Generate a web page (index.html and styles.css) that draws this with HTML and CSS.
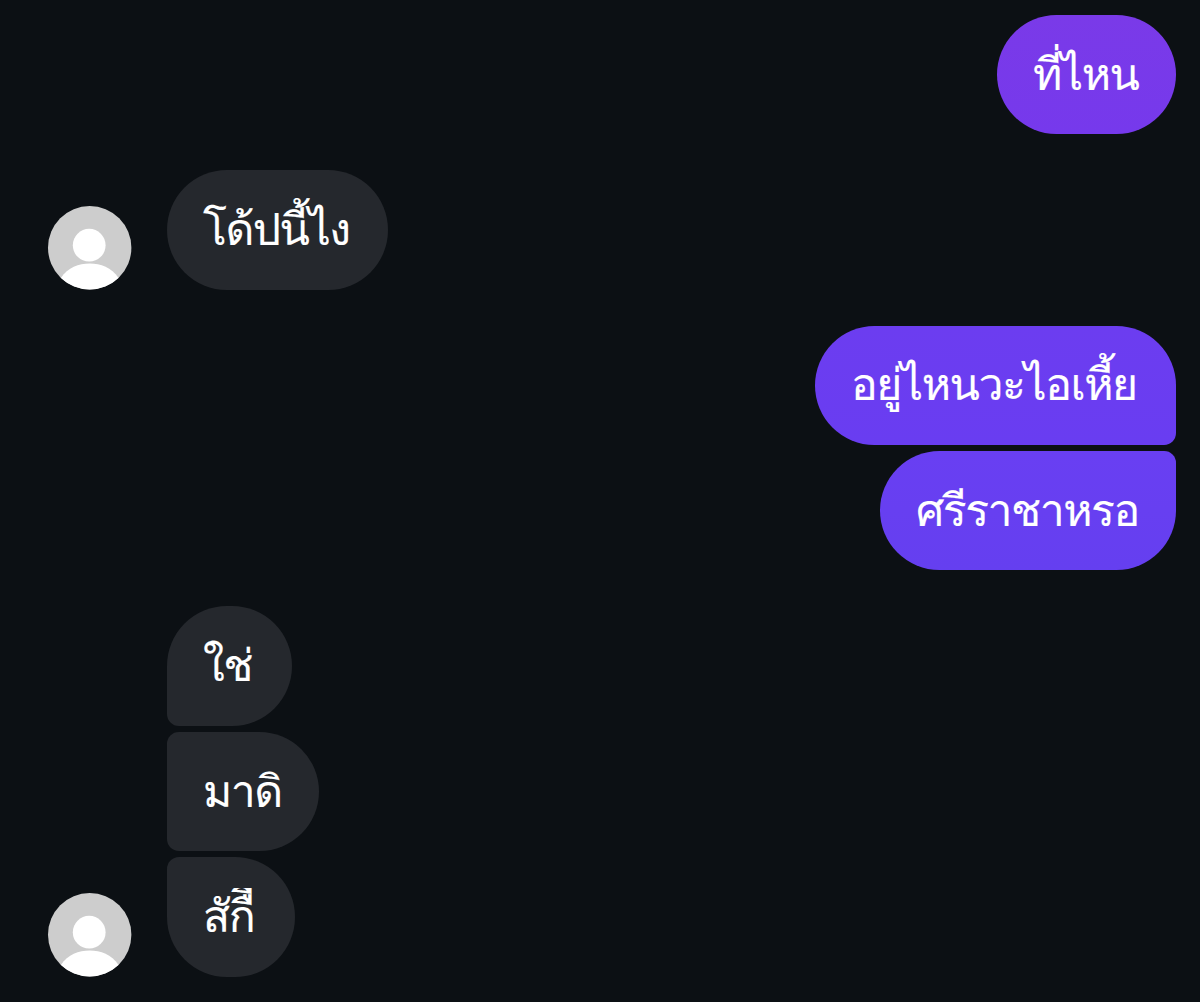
FILE: index.html
```html
<!DOCTYPE html>
<html lang="th">
<head>
<meta charset="utf-8">
<title>Chat</title>
<link rel="stylesheet" href="styles.css">
</head>
<body>
<main class="chat">
  <div class="row sent"><div class="bubble v1"><span>ที่ไหน</span></div></div>
  <div class="row received">
    <svg class="avatar" viewBox="0 0 84 84"><circle cx="42" cy="42" r="42" fill="#cdcdcd"/><circle cx="41.5" cy="39.5" r="16.5" fill="#fff"/><path d="M13 72.5C20 62 31 58 42 58s22 4 29 14.5A42 42 0 0 1 13 72.5Z" fill="#fff"/></svg>
    <div class="bubble g1"><span>โด้ปนี้ไง</span></div>
  </div>
  <div class="row sent">
    <div class="stack">
      <div class="bubble first v2"><span>อยู่ไหนวะไอเหี้ย</span></div>
      <div class="bubble last v3"><span>ศรีราชาหรอ</span></div>
    </div>
  </div>
  <div class="row received">
    <svg class="avatar" viewBox="0 0 84 84"><circle cx="42" cy="42" r="42" fill="#cdcdcd"/><circle cx="41.5" cy="39.5" r="16.5" fill="#fff"/><path d="M13 72.5C20 62 31 58 42 58s22 4 29 14.5A42 42 0 0 1 13 72.5Z" fill="#fff"/></svg>
    <div class="stack">
      <div class="bubble first g2"><span>ใช่</span></div>
      <div class="bubble middle g3"><span>มาดิ</span></div>
      <div class="bubble last g4"><span>สักืื</span></div>
    </div>
  </div>
</main>
</body>
</html>
```
FILE: styles.css
```css
* { box-sizing: border-box; }
body { margin: 0; background: #0c1014; color: #fff; font-family: Loma, "Liberation Sans", sans-serif; }
.chat { height: 1002px; padding: 15px 24px 0 48px; display: flex; flex-direction: column; gap: 36px; overflow: hidden; }
.row { display: flex; align-items: flex-end; }
.sent { justify-content: flex-end; }
.received { gap: 35.6px; }
.avatar { width: 83.4px; height: 83.4px; flex: none; overflow: visible; }
.stack { display: flex; flex-direction: column; gap: 6.2px; }
.sent .stack { align-items: flex-end; }
.bubble { height: 119.3px; padding: 0 32px 0 36px; border-radius: 60px; display: flex; align-items: center; white-space: nowrap; font-size: 44.5px; line-height: 60px; letter-spacing: -1.5px; -webkit-text-stroke: 0.15px #fff; }
.received .bubble { background: #25282d; }
.sent .first { border-bottom-right-radius: 12px; }
.sent .last { border-top-right-radius: 12px; }
.received .first { border-bottom-left-radius: 12px; }
.received .middle { border-top-left-radius: 12px; border-bottom-left-radius: 12px; }
.received .last { border-top-left-radius: 12px; }
.v1 { width: 179px; background: linear-gradient(#7a3ae8, #7639ec); }
.v2 { width: 361px; background: linear-gradient(#6c3df0, #693df1); }
.v3 { width: 296px; background: linear-gradient(#693ff2, #653ff0); }
.g1 { width: 221px; }
.g2 { width: 125px; }
.g3 { width: 152px; }
.g4 { width: 128px; }
.g4 span { clip-path: inset(1px 0 0 0); }
```
